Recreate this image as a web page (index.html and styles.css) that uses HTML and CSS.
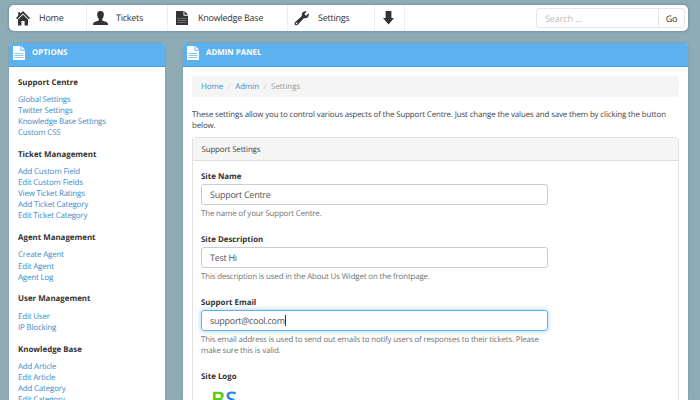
FILE: index.html
```html
<!DOCTYPE html>
<html lang="en">
<head>
<meta charset="utf-8">
<title>Admin Panel</title>
<link rel="stylesheet" href="styles.css">
</head>
<body>
<svg class="defs" aria-hidden="true">
  <symbol id="page" viewBox="0 0 12 14">
    <path d="M0 0H7.5V4.7H12V14H0Z"/>
    <path d="M8.4 0L12 3.8H8.4Z"/>
  </symbol>
</svg>
<nav class="navbar">
  <a class="item home"><svg class="icon" width="14" height="15" viewBox="0 0 14 15"><path d="M7 0L14 7L12.8 8.2L7 2.5L1.2 8.2L0 7L2.2 4.8V1.2H4.2V2.8Z"/><path d="M7 3.7L12 8.6V14.5H8.6V10H5.4V14.5H2V8.6Z"/></svg><span>Home</span></a>
  <a class="item tickets"><svg class="icon" width="15" height="14" viewBox="0 0 15 14"><path d="M7.5 0C10 0 11 1.6 10.8 4C10.7 6 9.9 7.2 9.2 8V9.6L14 11.2Q15 11.7 15 14H0Q0 11.7 1 11.2L5.8 9.6V8C5.1 7.2 4.3 6 4.2 4C4 1.6 5 0 7.5 0Z"/></svg><span>Tickets</span></a>
  <a class="item kb"><svg class="icon" width="12" height="14"><use href="#page"/><path class="lines-dark" d="M1.5 7.5H10.5M1.5 9.5H10.5M1.5 11.5H10.5"/></svg><span>Knowledge Base</span></a>
  <a class="item settings"><svg class="icon" width="15" height="15" viewBox="0 0 15 15"><path d="M12.8 .5L10.6 2.7L11 4.2L12.4 4.5L14.6 2.3Q15.4 4.6 13.8 6.2Q12.2 7.6 10 7L4 13.5Q2.6 15 1.1 13.9Q-.2 12.4 1.3 11L7.9 5Q7.3 2.8 8.8 1.3Q10.5 -.2 12.8 .5Z"/><circle class="hole" cx="2.6" cy="12.4" r=".8"/></svg><span>Settings</span></a>
  <a class="item more"><svg class="icon" width="11" height="14" viewBox="0 0 11 14"><path d="M2.6 0H8.4V7H11L5.5 13.5L0 7H2.6Z"/></svg></a>
  <div class="search"><span class="query">Search ...</span><span class="go">Go</span></div>
</nav>
<div class="columns">
  <aside class="card">
    <header class="card-head"><svg class="icon" width="12" height="14"><use href="#page"/><path class="lines-light" d="M1.5 7.5H10.5M1.5 9.5H10.5M1.5 11.5H10.5"/></svg><span>OPTIONS</span></header>
    <div class="menu">
      <h4>Support Centre</h4>
      <a>Global Settings</a><a>Twitter Settings</a><a>Knowledge Base Settings</a><a>Custom CSS</a>
      <h4>Ticket Management</h4>
      <a>Add Custom Field</a><a>Edit Custom Fields</a><a>View Ticket Ratings</a><a>Add Ticket Category</a><a>Edit Ticket Category</a>
      <h4>Agent Management</h4>
      <a>Create Agent</a><a>Edit Agent</a><a>Agent Log</a>
      <h4>User Management</h4>
      <a>Edit User</a><a>IP Blocking</a>
      <h4>Knowledge Base</h4>
      <a>Add Article</a><a>Edit Article</a><a>Add Category</a><a>Edit Category</a>
    </div>
  </aside>
  <main class="card">
    <header class="card-head"><svg class="icon" width="12" height="14"><use href="#page"/><path class="lines-light" d="M1.5 7.5H10.5M1.5 9.5H10.5M1.5 11.5H10.5"/></svg><span>ADMIN PANEL</span></header>
    <div class="content">
      <div class="crumbs"><a>Home</a><i>/</i><a>Admin</a><i>/</i><span>Settings</span></div>
      <p class="intro">These settings allow you to control various aspects of the Support Centre. Just change the values and save them by clicking the button<br>below.</p>
      <section class="panel">
        <div class="panel-head">Support Settings</div>
        <div class="fields">
          <label>Site Name</label>
          <div class="input">Support Centre</div>
          <p class="help">The name of your Support Centre.</p>
          <label>Site Description</label>
          <div class="input">Test Hi</div>
          <p class="help">This description is used in the About Us Widget on the frontpage.</p>
          <label>Support Email</label>
          <div class="input focus">support@cool.com<span class="caret"></span></div>
          <p class="help">This email address is used to send out emails to notify users of responses to their tickets. Please<br>make sure this is valid.</p>
          <label>Site Logo</label>
          <div class="logo"><span class="logo-b">B</span><span class="logo-s">S</span></div>
        </div>
      </section>
    </div>
  </main>
</div>
</body>
</html>
```
FILE: styles.css
```css
* { box-sizing: border-box; }
body {
  margin: 0;
  height: 400px;
  overflow: hidden;
  padding: 5px 12px 0 9px;
  background: #8eabb6;
  font: 7.9px/11.1px "Open Sans", sans-serif;
  letter-spacing: -.125px;
  text-rendering: geometricPrecision;
  color: #444;
}
p, h4 { margin: 0; }
.defs { display: none; }
.icon { flex: none; fill: #333; }
.lines-dark { stroke: #888; stroke-width: .7; }
.lines-light { stroke: #8cc9f3; stroke-width: 1; }
.hole { fill: #fff; }
.navbar {
  display: flex;
  height: 26px;
  background: #fff;
  border-radius: 5px;
  box-shadow: 0 0 2px 1px #7595a1;
  font-size: 9px;
  letter-spacing: -.25px;
  color: #333;
}
.item {
  display: flex;
  align-items: center;
  border-right: 1px solid #eee;
}
.home { width: 78px; padding-left: 7px; gap: 9px; }
.tickets { width: 81px; padding-left: 6px; gap: 8px; }
.kb { width: 120px; padding-left: 8px; gap: 10px; }
.settings { width: 87px; padding-left: 6px; gap: 9px; }
.more { width: 30px; padding-left: 8px; }
.search {
  display: flex;
  width: 149px;
  height: 20px;
  margin: 3px 3px 0 auto;
  border: 1px solid #e6e6e6;
  border-radius: 3px;
  line-height: 19px;
}
.query { flex: 1; padding-left: 8px; letter-spacing: -.1px; color: #bbb; }
.go { width: 26px; border-left: 1px solid #e6e6e6; text-align: center; }
.columns {
  display: grid;
  grid-template-columns: 156px 505px;
  gap: 18px;
  margin-top: 12px;
}
.card {
  height: 357px;
  overflow: hidden;
  background: #fff;
  border-radius: 4px 4px 0 0;
  box-shadow: 0 0 2px #71929e;
}
.card-head {
  display: flex;
  gap: 7px;
  height: 24px;
  padding: 3px 0 0 4px;
  background: #5bb2ee;
  border-bottom: 1px solid #3da3ea;
  color: #fff;
  font-weight: 700;
  letter-spacing: 0;
}
.card-head span { margin-top: 1.7px; }
.card-head .icon { fill: #fff; }
.menu { padding: 10.7px 9px 0; }
.menu h4 { margin: 10.8px 0 6px; font-size: 7.9px; line-height: 11.1px; letter-spacing: 0; color: #333; }
.menu h4:first-child { margin-top: 0; }
.menu a { display: block; letter-spacing: -.16px; }
a { color: #428bca; }
.navbar a { color: inherit; }
.content { padding: 9px 9px 0; }
.crumbs {
  display: flex;
  height: 21px;
  padding-left: 9px;
  background: #f5f5f5;
  border-radius: 3px;
  line-height: 22px;
  letter-spacing: -.02px;
  color: #999;
}
.crumbs i { width: 12px; text-align: center; font-style: normal; color: #ccc; }
.intro { margin-top: 13px; white-space: nowrap; }
.panel {
  height: 300px;
  margin-top: 5px;
  border: 1px solid #e2e2e2;
  border-radius: 3px;
}
.panel-head {
  height: 23px;
  padding-left: 8.5px;
  background: #f5f5f5;
  border-bottom: 1px solid #ddd;
  line-height: 24px;
}
.fields { padding: 11px 8px 0; }
label { display: block; height: 12px; font-weight: 700; letter-spacing: 0; color: #333; }
.input {
  display: flex;
  align-items: center;
  width: 347px;
  height: 21px;
  padding-left: 8px;
  border: 1px solid #ccc;
  border-radius: 3px;
  font-size: 9px;
  letter-spacing: -.27px;
  color: #555;
}
.focus { border-color: #66afe9; box-shadow: 0 0 5px rgba(102,175,233,.6); }
.caret { width: 1px; height: 11px; background: #333; }
.help { margin: 4px 0 14.9px; letter-spacing: -.15px; color: #737373; white-space: nowrap; }
.logo { padding-left: 10px; font-size: 21.5px; line-height: 31px; font-weight: 600; letter-spacing: 0; }
.logo-b { color: #55cc11; }
.logo-s { color: #2488e0; }
```
